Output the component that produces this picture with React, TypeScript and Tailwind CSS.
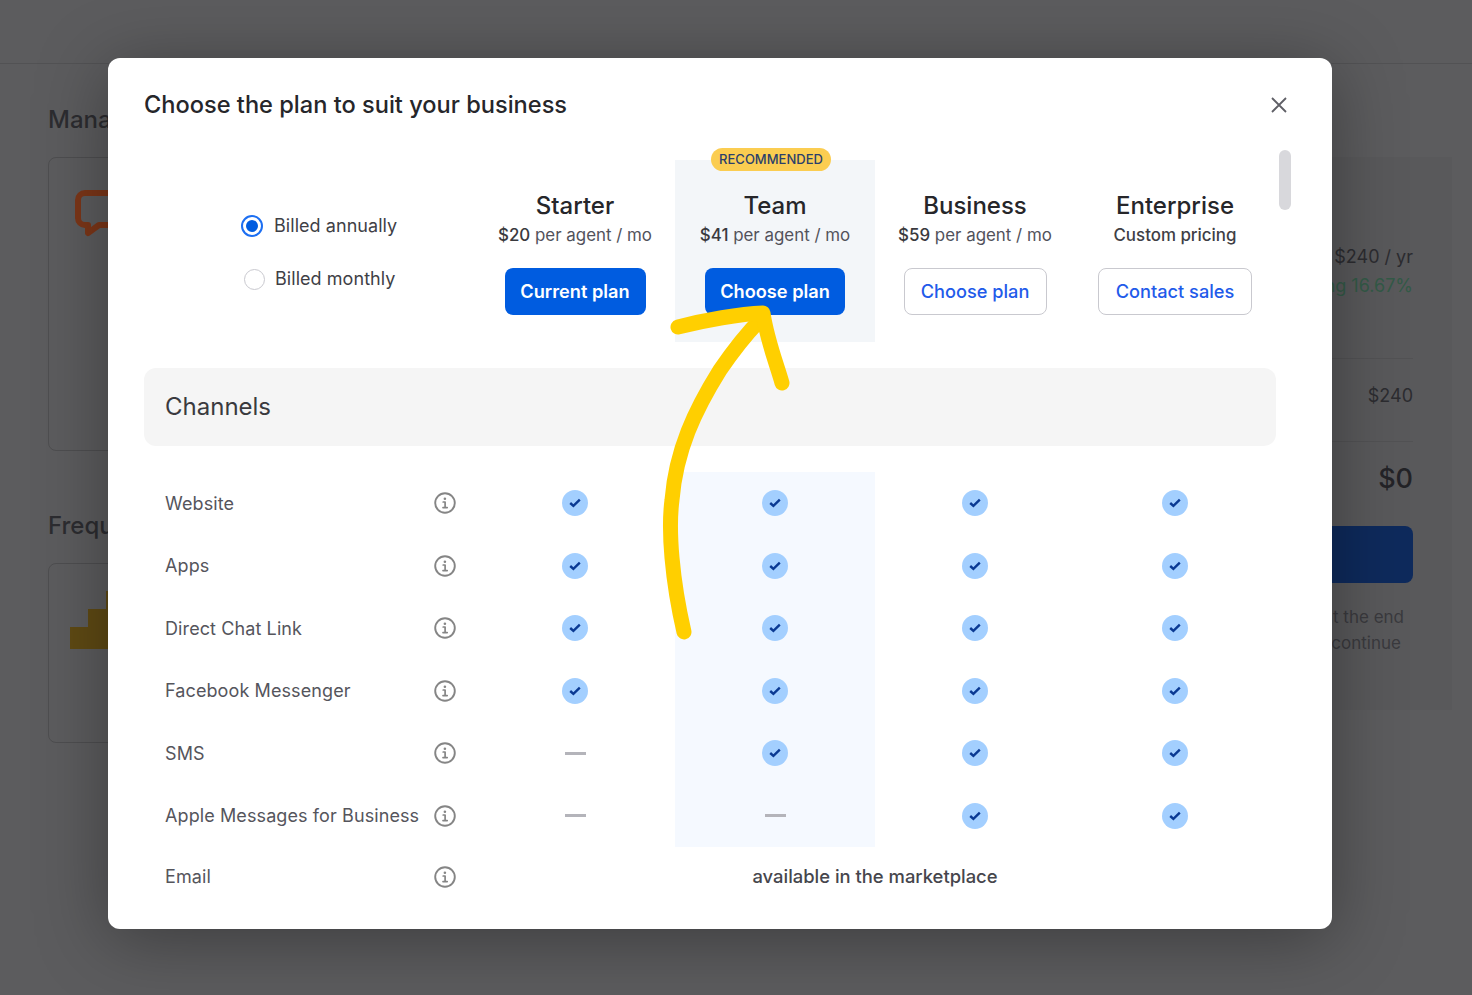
import React from "react";

const plans = [
  { name: "Starter", price: "$20", cta: "Current plan", solid: true, width: "w-[141px]" },
  { name: "Team", price: "$41", cta: "Choose plan", solid: true, width: "w-[140px]" },
  { name: "Business", price: "$59", cta: "Choose plan", solid: false, width: "w-[143px]" },
  { name: "Enterprise", price: "", cta: "Contact sales", solid: false, width: "w-[154px]" },
];

const channels: { label: string; has: boolean[] }[] = [
  { label: "Website", has: [true, true, true, true] },
  { label: "Apps", has: [true, true, true, true] },
  { label: "Direct Chat Link", has: [true, true, true, true] },
  { label: "Facebook Messenger", has: [true, true, true, true] },
  { label: "SMS", has: [false, true, true, true] },
  { label: "Apple Messages for Business", has: [false, false, true, true] },
];

function InfoIcon() {
  return (
    <svg width="22" height="22" viewBox="0 0 22 22" fill="none" stroke="#858585" strokeLinecap="round" strokeLinejoin="round">
      <circle cx="11" cy="11" r="9.8" strokeWidth="1.9" />
      <path d="M9.2 10h1.9v5.6M9 15.6h4.2" strokeWidth="1.7" />
      <circle cx="10.9" cy="6.8" r="0.6" strokeWidth="1.4" />
    </svg>
  );
}

function Check() {
  return (
    <span className="flex h-[26px] w-[26px] items-center justify-center rounded-full bg-[#a3cfff]">
      <svg width="12" height="10" viewBox="0 0 12 10" fill="none" stroke="#0b3a94" strokeWidth="2.4" strokeLinejoin="miter">
        <path d="M1.2 5l3.2 2.9L10.8 1.6" />
      </svg>
    </span>
  );
}

function Dash() {
  return <span className="block h-[3px] w-[21px] bg-[#b4b4ba]" />;
}

function BackgroundPage() {
  return (
    <div className="h-full text-[#2c2c30]">
      <div className="h-[64px] border-b border-[#525254]" />
      <div className="flex justify-between pl-[48px] pr-[20px]">
        {/* Left column */}
        <div className="w-[800px]">
          <h2 className="mt-[40px] h-[32px] text-[24px] leading-[32px] font-medium">Manage</h2>
          <div className="mt-[21px] h-[294px] rounded-lg border border-[#4e4e50] pl-[26px] pt-[32px]">
            <svg width="60" height="48" viewBox="0 0 60 48" fill="none" stroke="#7c3618" strokeWidth="6" strokeLinejoin="round">
              <path d="M10 3h36a7 7 0 0 1 7 7v18a7 7 0 0 1-7 7H24l-11 8v-8h-3a7 7 0 0 1-7-7V10a7 7 0 0 1 7-7z" />
            </svg>
          </div>
          <h2 className="mt-[59px] h-[32px] text-[24px] leading-[32px] font-medium">Frequently</h2>
          <div className="mt-[21px] h-[180px] rounded-lg border border-[#4e4e50] pl-[21px] pt-[27px]">
            <svg width="60" height="58" viewBox="0 0 60 58" fill="#5f4a14">
              <path d="M0 36h18V18h18V0h24v58H0z" />
            </svg>
          </div>
        </div>

        {/* Right summary panel */}
        <div className="mt-[93px] h-[553px] w-[500px] bg-[#59595b] pl-[40px] pr-[39px] pt-[88px] text-right text-[18px] leading-[24px]">
          <div>$240 / yr</div>
          <div className="mt-[5px] text-[#335a47]">Saving 16.67%</div>
          <div className="mt-[60px] flex h-[84px] items-center justify-end border-y border-[#525254] pb-[8px]">$240</div>
          <div className="mt-[20px] text-[27px] leading-[34px] font-medium text-[#232327]">$0</div>
          <div className="mt-[30px] h-[57px] rounded-lg bg-[#0e2a5c]" />
          <div className="mt-[21px] pr-[9px] text-[17px] leading-[26px] text-[#3a3a3e]">at the end</div>
          <div className="pr-[12px] text-[17px] leading-[26px] text-[#3a3a3e]">to continue</div>
        </div>
      </div>
    </div>
  );
}

export default function App() {
  return (
    <div className="relative h-[995px] w-full overflow-hidden bg-[#5c5c5e] font-['Inter',sans-serif]">
      <BackgroundPage />

      {/* Plan modal */}
      <div className="absolute left-[108px] top-[58px] h-[871px] w-[1224px] overflow-hidden rounded-xl bg-white pl-[36px] shadow-[0_10px_70px_rgba(0,0,0,0.35)]">
        <div className="flex h-[102px] items-start justify-between pr-[42px] pt-[32px]">
          <h1 className="text-[23.6px] leading-[30px] font-medium text-[#26262a]">Choose the plan to suit your business</h1>
          <button className="mt-[4px] text-[#5f5f66]" aria-label="Close">
            <svg width="22" height="22" viewBox="0 0 22 22" fill="none" stroke="currentColor" strokeWidth="1.8">
              <path d="M4 4l14 14M18 4L4 18" />
            </svg>
          </button>
        </div>

        {/* Plan headers */}
        <div className="grid h-[182px] w-[1131px] grid-cols-[331px_repeat(4,200px)]">
          <div className="pt-[53px] text-[18px] leading-[26px] tracking-[0.05px] text-[#3f3f46]">
            <label className="flex items-center gap-[11px] pl-[97px]">
              <span className="flex h-[22px] w-[22px] items-center justify-center rounded-full border-2 border-[#1d6ff2]">
                <span className="h-[12px] w-[12px] rounded-full bg-[#005ce0]" />
              </span>
              Billed annually
            </label>
            <label className="mt-[27px] flex items-center gap-[10px] pl-[100px]">
              <span className="h-[21px] w-[21px] rounded-full border border-[#c9c9cf]" />
              Billed monthly
            </label>
          </div>
          {plans.map((plan) => (
            <div
              key={plan.name}
              className={`relative flex flex-col items-center pt-[30px] ${plan.name === "Team" ? "bg-[#f3f6f9]" : ""}`}
            >
              {plan.name === "Team" && (
                <span className="absolute -top-[12px] left-[36px] flex h-[23px] w-[120px] items-center justify-center rounded-full bg-[#fbcd51] text-[13px] font-medium text-[#2b3f6b]">
                  RECOMMENDED
                </span>
              )}
              <div className="text-[24px] leading-[32px] font-medium text-[#26262a]">{plan.name}</div>
              <div className="h-[26px] text-[16.9px] leading-[26px] text-[#52525b]">
                {plan.price ? (
                  <>
                    <span className="font-medium text-[#3a3a3e]">{plan.price}</span> per agent / mo
                  </>
                ) : (
                  <span className="font-medium text-[#3f3f46]">Custom pricing</span>
                )}
              </div>
              <button
                className={`mt-[20px] h-[47px] rounded-lg text-[18.2px] ${plan.width} ${
                  plan.solid ? "bg-[#005ce0] font-semibold text-white" : "border border-[#c9c9cf] bg-white font-medium text-[#1f5bea]"
                }`}
              >
                {plan.cta}
              </button>
            </div>
          ))}
        </div>

        {/* Channels */}
        <div className="mt-[26px] flex h-[78px] w-[1132px] items-center rounded-xl bg-[#f5f5f5] pl-[21px] text-[24px] text-[#3a3a3e]">
          Channels
        </div>

        <div className="relative mt-[26px] w-[1131px]">
          {channels.map((row) => (
            <div key={row.label} className="grid h-[62.5px] grid-cols-[331px_repeat(4,200px)] items-stretch">
              <div className="flex items-center justify-between pl-[21px] pr-[19px] text-[18px] tracking-[0.1px] text-[#55555c]">
                {row.label}
                <InfoIcon />
              </div>
              {row.has.map((has, i) => (
                <div key={i} className={`flex items-center justify-center ${i === 1 ? "bg-[#f5f9ff]" : ""}`}>
                  {has ? <Check /> : <Dash />}
                </div>
              ))}
            </div>
          ))}
          <div className="grid h-[59px] grid-cols-[331px_800px] items-center">
            <div className="flex items-center justify-between pl-[21px] pr-[19px] text-[18px] tracking-[0.1px] text-[#55555c]">
              Email
              <InfoIcon />
            </div>
            <div className="text-center text-[18.4px] font-medium text-[#46464c]">available in the marketplace</div>
          </div>
        </div>

        {/* Scrollbar */}
        <div className="absolute left-[1171px] top-[92px] h-[60px] w-[12px] rounded-full bg-[#d8d8dc]" />
      </div>

      {/* Hand drawn arrow over the modal */}
      <svg
        className="absolute left-[655px] top-[300px]"
        width="140"
        height="345"
        viewBox="0 0 140 345"
        fill="none"
        stroke="#ffcf00"
        strokeWidth="15"
        strokeLinecap="round"
        strokeLinejoin="round"
      >
        <path d="M29 332C17 280 13 230 17 200C21 150 40 110 65 70C80 48 95 30 107 18" />
        <path d="M23 27C50 20 85 14 108 13C112 40 122 65 127 83" />
      </svg>
    </div>
  );
}
